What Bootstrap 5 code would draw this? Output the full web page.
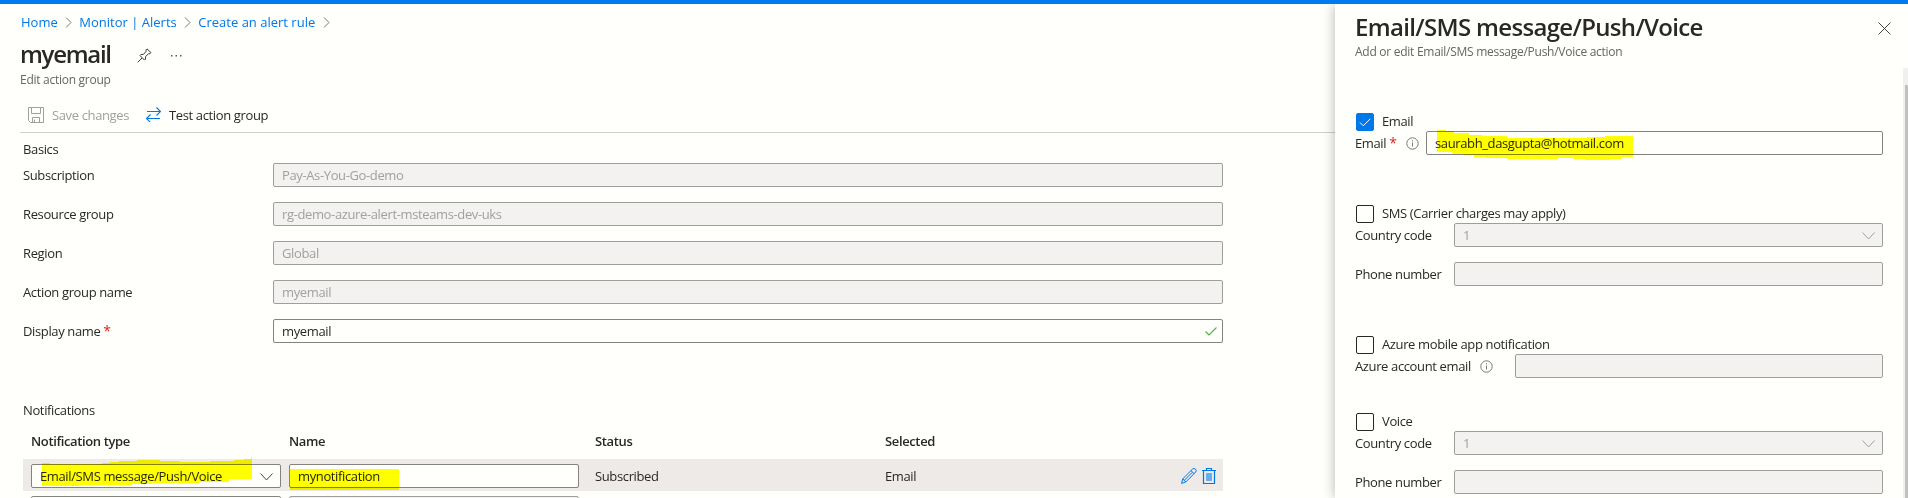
<!DOCTYPE html>
<html lang="en">
<head>
<meta charset="utf-8">
<meta name="viewport" content="width=device-width, initial-scale=1">
<title>myemail - Edit action group</title>
<link href="https://cdn.jsdelivr.net/npm/bootstrap@5.3.0/dist/css/bootstrap.min.css" rel="stylesheet">
<style>
  body { font: 13px/18px "Open Sans", "Noto Sans", sans-serif; letter-spacing: -.37px; color: #292827; background: #fffffc; height: 498px; overflow: hidden; }
  svg { display: block; flex: none; fill: none; stroke: currentColor; }
  .topbar { height: 4px; background: #007aef; }
  .workspace { height: 494px; }
  .main-pane { width: 1335px; padding-left: 20px; overflow: hidden; }
  .side-pane { width: 573px; padding-left: 20px; background: #fffffc; box-shadow: 0 0 12px rgba(0,0,0,.3); clip-path: inset(0 0 0 -16px); }
  .crumbs { height: 37px; letter-spacing: 0; gap: 7.3px; padding: 0 0 2px 1px; }
  .crumbs a { color: #0078ea; text-decoration: none; }
  .crumbs svg { color: #777; margin-top: 1px; }
  .page-title { font-size: 24px; line-height: 30px; font-weight: 600; margin: 0; }
  .main-title { width: 117px; letter-spacing: -1.3px; margin-top: -2px; }
  .side-title { letter-spacing: -.67px; padding-top: 8px; }
  .dots { margin-left: 18px; }
  .subtitle { font-size: 12px; line-height: 16px; color: #666563; letter-spacing: -.27px; padding-top: 3px; }
  .side-title + .subtitle { padding-top: 2px; }
  .cmds { height: 36px; margin-top: 9px; border-bottom: 1px solid #cfcfcb; padding-left: 8px; gap: 17px; }
  .cmds .btn { font-size: 13px; line-height: 18px; letter-spacing: inherit; border: 0; padding: 0; color: inherit; border-radius: 0; gap: 8px; }
  .cmds .btn span { padding-top: 1px; }
  .cmds .btn:disabled { color: #a2a09e; opacity: 1; }
  .fields { width: 1200px; margin-left: 3px; }
  .section-basics { height: 30px; padding-top: 7px; }
  .section-notify { padding-top: 43px; }
  .field-row { height: 24px; margin-bottom: 15px; }
  .field-row > label { line-height: 24px; flex: none; }
  .req { color: #e0241b; font-size: 14px; line-height: 10px; }
  .field { height: 24px; min-height: 0; padding: 0 8px; font: inherit; letter-spacing: inherit; line-height: 22px; border: 1px solid #858381; border-radius: 2px; color: #292827; background-color: #fffffc; }
  .field:disabled, .field.off { background-color: #f3f2f0; border-color: #a09e9c; color: #a2a09e; opacity: 1; }
  .lbl-basic { width: 250px; }
  .lbl-side { width: 99px; }
  .lbl-email { width: 71px; }
  .lbl-account { width: 160px; }
  .info { color: #777; margin-left: 9px; }
  .grid-head, .grid-row { display: grid; grid-template-columns: 250px 314px 290px 1fr auto; padding-left: 8px; }
  .grid-head { font-weight: 600; height: 27px; margin-top: 13px; }
  .grid-head > :nth-child(2), .grid-row > :nth-child(2) { padding-left: 8px; }
  .grid-row { height: 32px; padding-top: 2px; align-items: center; }
  .grid-row.current { background: #eeeae7; }
  .row-tools { padding-right: 7px; gap: 5px; color: #0078ea; }
  .name-field { width: 290px; }
  .marker { position: absolute; mix-blend-mode: multiply; pointer-events: none; z-index: 3; stroke: none; fill: #ff0; }
  .marker-type { left: 11px; top: -7px; }
  .marker-name { left: 9px; top: 5px; }
  .marker-email { left: 82px; top: -1px; }
  .option { height: 18px; gap: 8px; margin-left: 1px; }
  .option label { margin-top: -2px; }
  .option .form-check-input { width: 18px; height: 18px; margin: 0; border: 1px solid #292827; border-radius: 2px; background-color: #fffffc; flex: none; }
  .option .form-check-input:checked { border-color: #0078ea; background-color: #0078ea; background-image: url("data:image/svg+xml,%3Csvg xmlns='http://www.w3.org/2000/svg' viewBox='0 0 18 18'%3E%3Cpath d='M4 9.5l3.3 3.3 7-7' fill='none' stroke='%23fff'/%3E%3C/svg%3E"); background-size: 18px; }
  .side-form { width: 528px; }
  .first-option { margin-top: 53px; }
  .group-end { margin-bottom: 50px; }
  .group-end-sm { margin-bottom: 35px; }
  .close-icon { margin: 18px 12px 0 -25px; }
  .scroll-track { width: 5px; margin-top: 64px; padding: 17px 0 0 2px; background: #f0f0ee; }
  .scroll-thumb { height: 100%; background: #c1c1bf; }
  .chev { position: absolute; right: 8px; top: 9px; pointer-events: none; }
  .valid-tick { position: absolute; right: 6px; top: 8px; }
</style>
<script src="https://cdn.jsdelivr.net/npm/bootstrap@5.3.0/dist/js/bootstrap.bundle.min.js"></script>
</head>
<body>
<div class="topbar"></div>
<div class="workspace d-flex overflow-hidden">
  <main class="main-pane flex-shrink-0">
    <nav class="crumbs d-flex align-items-center">
      <a href="#">Home</a>
      <svg width="7" height="11" viewBox="0 0 7 11"><path d="M1 .5l5 5-5 5"/></svg>
      <a href="#">Monitor | Alerts</a>
      <svg width="7" height="11" viewBox="0 0 7 11"><path d="M1 .5l5 5-5 5"/></svg>
      <a href="#">Create an alert rule</a>
      <svg width="7" height="11" viewBox="0 0 7 11"><path d="M1 .5l5 5-5 5"/></svg>
    </nav>
    <div class="d-flex align-items-center">
      <h1 class="page-title main-title">myemail</h1>
      <svg width="15" height="15" viewBox="0 0 15 15"><path d="M.7 14.300L5 10M3 7.600l4.500 4.500 1-1V8.700l3-2.900 1.500-.1 1-1L10 .9l-1 1v1.600L6.300 6.500H4L3 7.600" stroke="#3b3a39"/></svg>
      <svg class="dots" width="12" height="3" viewBox="0 0 12 3"><path d="M1 1h1.500v1.500H1zM5.500 1H7v1.500H5.500zM10 1h1.500v1.500H10z" fill="#555" stroke="none"/></svg>
    </div>
    <div class="subtitle">Edit action group</div>
    <div class="cmds d-flex align-items-center">
      <button class="btn d-flex align-items-center" disabled>
        <svg width="16" height="16" viewBox="0 0 16 16"><path d="M.5.5h15v15h-13l-2-2zM3.500.5v6h9v-6M4.500 15.500v-5h7v5M6.500 15v-2.500"/></svg><span>Save changes</span></button>
      <button class="btn d-flex align-items-center">
        <svg width="15" height="15" viewBox="0 0 15 15"><path d="M1 4.500h13M10.500.5l4 4-4 4M14 11.500H1M4.500 7.500l-4 4 4 4" stroke="#0078ea" stroke-width="1.100"/></svg><span>Test action group</span></button>
    </div>
    <div class="fields">
      <div class="section-basics">Basics</div>
      <div class="field-row d-flex"><label class="lbl-basic">Subscription</label><input class="field form-control" value="Pay-As-You-Go-demo" disabled></div>
      <div class="field-row d-flex"><label class="lbl-basic">Resource group</label><input class="field form-control" value="rg-demo-azure-alert-msteams-dev-uks" disabled></div>
      <div class="field-row d-flex"><label class="lbl-basic">Region</label><input class="field form-control" value="Global" disabled></div>
      <div class="field-row d-flex"><label class="lbl-basic">Action group name</label><input class="field form-control" value="myemail" disabled></div>
      <div class="field-row d-flex position-relative"><label class="lbl-basic">Display name <span class="req">*</span></label><input class="field form-control" value="myemail">
        <svg class="valid-tick" width="12" height="9" viewBox="0 0 12 9"><path d="M.5 4.500l3.500 3.500 7.500-7.500" stroke="#4fb345" stroke-width="1.200"/></svg></div>
      <div class="section-notify">Notifications</div>
      <div class="grid-head"><span>Notification type</span><span>Name</span><span>Status</span><span>Selected</span></div>
      <div class="grid-row current">
        <div class="position-relative">
          <div class="field">Email/SMS message/Push/Voice</div>
          <svg class="chev" width="13" height="8" viewBox="0 0 13 8"><path d="M.5.5l6 6.500 6-6.500" stroke="#444"/></svg>
          <svg class="marker marker-type" width="210" height="30" viewBox="0 0 210 30"><path d="M0 6h8v1h52V6h8V5h9V4h18V3h23v1h20v1h30V4h24V3h10V2h7V0h8v22h-30v3h-29v1h-48v1h-20v1H37v1H0z"/></svg>
        </div>
        <div class="position-relative">
          <input class="field name-field form-control" value="mynotification">
          <svg class="marker marker-name" width="109" height="21" viewBox="0 0 109 21"><path d="M0 0h109v21H0z"/></svg>
        </div>
        <span>Subscribed</span><span>Email</span>
        <span class="row-tools d-flex">
          <svg width="16" height="16" viewBox="0 0 16 16"><path d="M.6 15.400l1.100-4.500L11.600 1q1.500-1.200 2.900.2 1.300 1.400.2 2.800L4.900 13.900zM1.700 10.900l3.200 3M10 2.600l3.200 3.100M3.300 12.300l8-8" stroke-width="1"/></svg>
          <svg width="14" height="16" viewBox="0 0 14 16"><path d="M0 2.500h14M4.500 2.500v-2h5v2M1.500 2.500v13h11v-13" stroke-width="1.200"/><path d="M4.500 5.500h5v7h-5z" fill="#66adec" stroke="#66adec"/></svg>
        </span>
      </div>
      <div class="grid-row">
        <div><div class="field"></div></div>
        <div><div class="field off name-field"></div></div>
      </div>
    </div>
  </main>

  <aside class="side-pane d-flex flex-shrink-0">
    <div class="side-form">
      <h2 class="page-title side-title">Email/SMS message/Push/Voice</h2>
      <div class="subtitle">Add or edit Email/SMS message/Push/Voice action</div>

      <div class="option first-option d-flex align-items-center"><input class="form-check-input" type="checkbox" checked id="o1"><label for="o1">Email</label></div>
      <div class="field-row group-end d-flex position-relative">
        <label class="lbl-email d-flex align-items-center">Email&nbsp;<span class="req">*</span>
          <svg class="info" width="13" height="13" viewBox="0 0 13 13"><circle cx="6.500" cy="6.500" r="5.700"/><path d="M6.500 5.500v4M6.500 3.200v1.200"/></svg></label>
        <input class="field form-control" value="saurabh_dasgupta@hotmail.com">
        <svg class="marker marker-email" width="196" height="30" viewBox="0 0 196 30"><path d="M0 0h8v1h9v2h15v2h14v1h24v2h80V7h18V6h28v21h-12v2h-11v1h-25v-1h-12v-1h-15v1H70v-1H49v-1H37v-2H26v-1H15v-2H0z"/></svg>
      </div>

      <div class="option d-flex align-items-center"><input class="form-check-input" type="checkbox" id="o2"><label for="o2">SMS (Carrier charges may apply)</label></div>
      <div class="field-row d-flex position-relative"><label class="lbl-side">Country code</label><input class="field form-control" value="1" disabled>
        <svg class="chev" width="13" height="8" viewBox="0 0 13 8"><path d="M.5.5l6 6.500 6-6.500" stroke="#a2a09e"/></svg></div>
      <div class="field-row group-end d-flex"><label class="lbl-side">Phone number</label><input class="field form-control" disabled></div>

      <div class="option d-flex align-items-center"><input class="form-check-input" type="checkbox" id="o3"><label for="o3">Azure mobile app notification</label></div>
      <div class="field-row d-flex group-end-sm">
        <label class="lbl-account d-flex align-items-center">Azure account email
          <svg class="info" width="13" height="13" viewBox="0 0 13 13"><circle cx="6.500" cy="6.500" r="5.700"/><path d="M6.500 5.500v4M6.500 3.200v1.200"/></svg></label>
        <input class="field form-control" disabled></div>

      <div class="option d-flex align-items-center"><input class="form-check-input" type="checkbox" id="o4"><label for="o4">Voice</label></div>
      <div class="field-row d-flex position-relative"><label class="lbl-side">Country code</label><input class="field form-control" value="1" disabled>
        <svg class="chev" width="13" height="8" viewBox="0 0 13 8"><path d="M.5.5l6 6.500 6-6.500" stroke="#a2a09e"/></svg></div>
      <div class="field-row mb-0 d-flex"><label class="lbl-side">Phone number</label><input class="field form-control" disabled></div>
    </div>
    <div class="ms-auto d-flex">
      <svg class="close-icon" width="13" height="13" viewBox="0 0 13 13"><path d="M.5.5l12 12M12.500.5l-12 12" stroke="#444"/></svg>
      <div class="scroll-track"><div class="scroll-thumb"></div></div>
    </div>
  </aside>
</div>
</body>
</html>
